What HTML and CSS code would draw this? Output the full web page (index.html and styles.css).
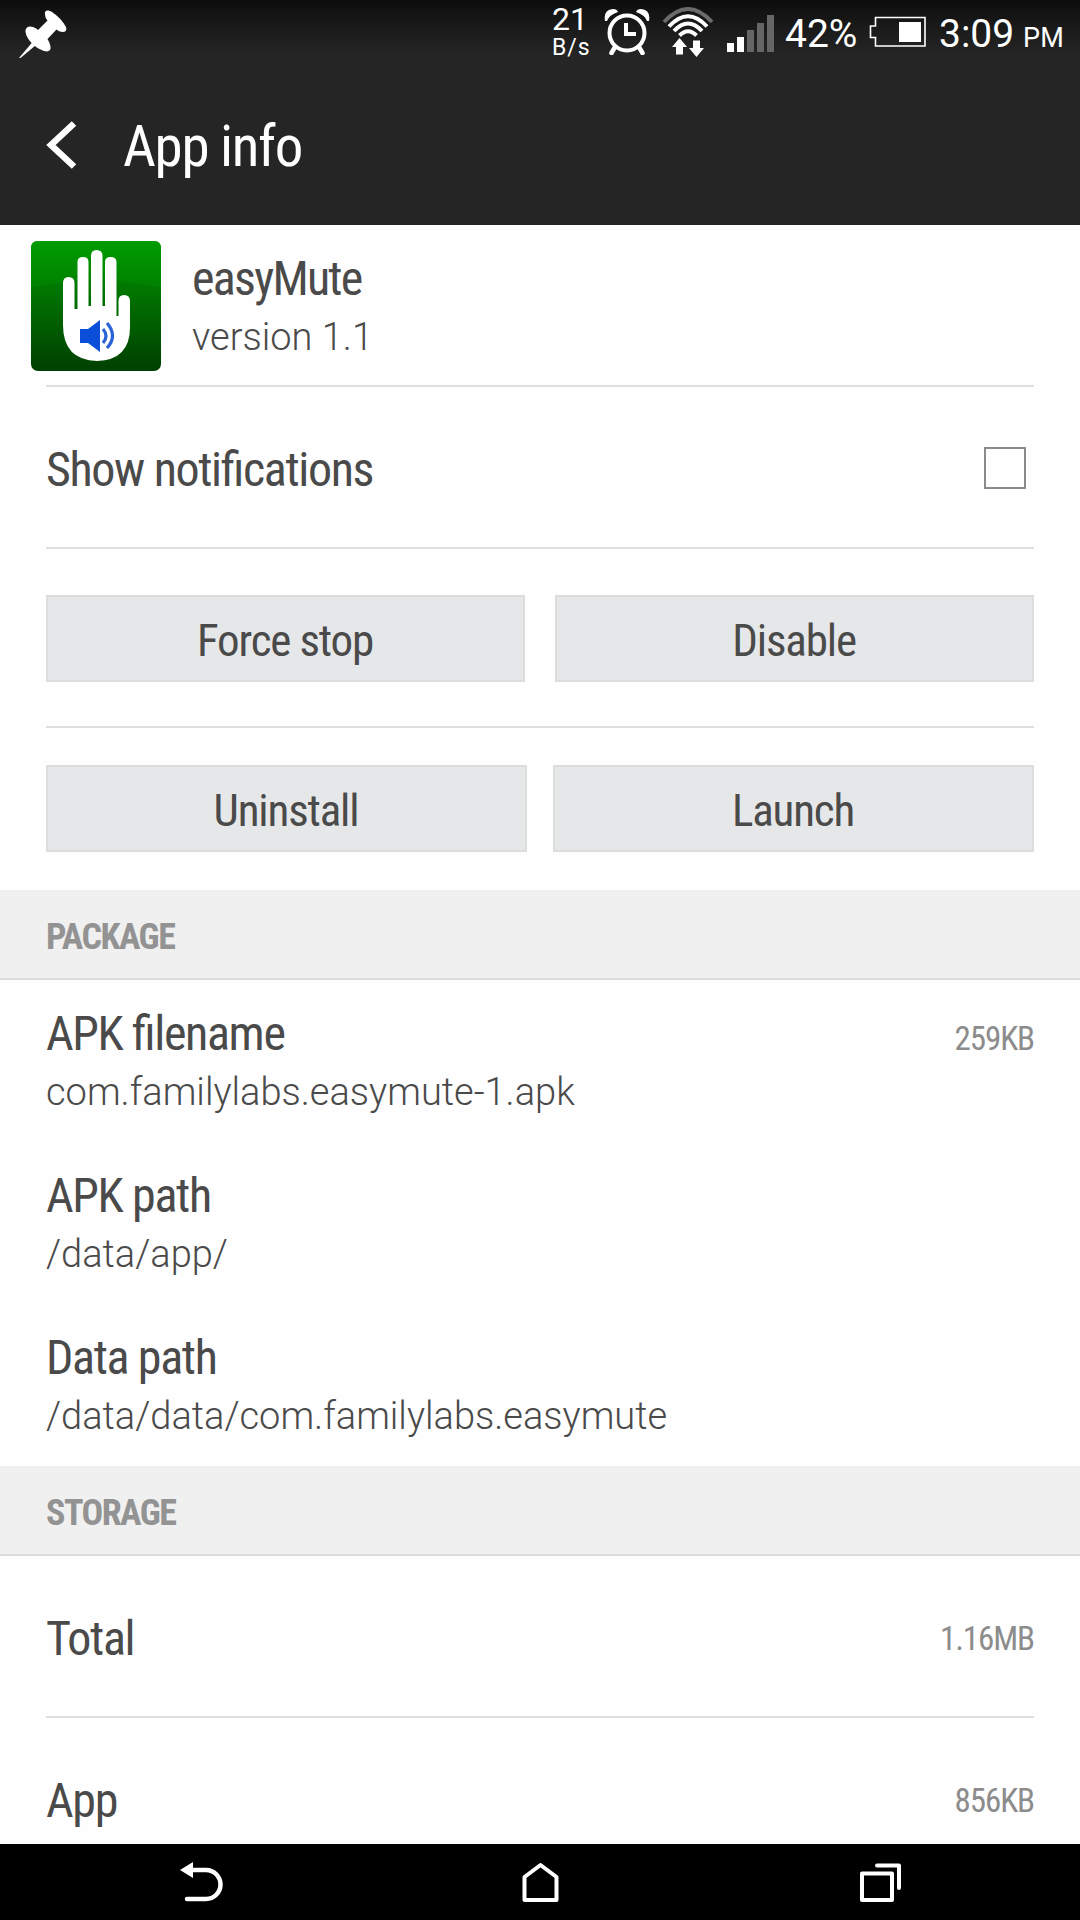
FILE: index.html
```html
<!DOCTYPE html>
<html lang="en">
<head>
<meta charset="utf-8">
<title>App info</title>
<link rel="stylesheet" href="styles.css">
</head>
<body>
<div class="screen">
  <header class="top">
    <div class="status">
      <svg class="pin" width="52" height="60" viewBox="18 0 52 60" fill="#fff"><path d="M19 58L32.500 42L36 45L20.500 58Z"/><path d="M45 14.500C44 10 48 9.500 52 12Q61 18 66 27Q67.500 32 62.500 32Q58.500 31.500 56.500 29.500L47.500 39Q51 45 50.500 49Q49.500 52.500 44 51Q35 48 29 40Q25 34 25.500 30Q27 25 33 27Q36 28 38 30L47.500 20.500Q45 18 45 14.500Z"/></svg>
      <div class="speed"><span class="rate">21</span><span class="unit">B/s</span></div>
      <svg class="alarm" width="46" height="48" viewBox="0 0 46 48" fill="none" stroke="#fff"><circle cx="23" cy="26" r="17.500" stroke-width="4"/><path d="M22 16V27H32" stroke-width="4"/><path d="M11 40L7.500 46M35 40L38.500 46" stroke-width="4.500" stroke-linecap="round"/><path d="M1 14Q-1 3 9 2Q13 2 14 5Q5 8 3 14ZM45 14Q47 3 37 2Q33 2 32 5Q41 8 43 14Z" fill="#fff" stroke="none"/></svg>
      <svg class="wifi" width="52" height="50" viewBox="0 0 52 50" fill="none" stroke="#fff" stroke-width="4"><path d="M2 15Q26 -11 50 15" stroke="#6b6b6b"/><path d="M7 19.500Q26 -1 45 19.500"/><path d="M12 24Q26 9 40 24"/><path d="M17.500 28.500Q26 20 34.500 28.500"/><path d="M17.500 31L25 40H21V47.500H14V40H10ZM34.500 50L27 41H31V33.500H38V41H42Z" fill="#fff" stroke="none"/></svg>
      <svg class="signal" width="48" height="38" viewBox="0 0 48 38"><path d="M0 28h7v9H0zM10 22h7v15h-7z" fill="#fff"/><path d="M20 15h7v22h-7zM30 8h7v29h-7zM40 0h7v37h-7z" fill="#666"/></svg>
      <span class="percent">42%</span>
      <svg class="battery" width="58" height="32" viewBox="0 0 58 32"><path d="M6.500 1.500H56V30H6.500V21.500H1.500V10H6.500Z" fill="none" stroke="#fff" stroke-width="1.600"/><path d="M30 6h22v20H30z" fill="#fff"/></svg>
      <span class="clock">3:09</span><span class="ampm">PM</span>
    </div>
    <div class="titlebar">
      <svg class="back" width="32" height="48" viewBox="0 0 32 48" fill="none" stroke="#fff" stroke-width="6.500"><path d="M28 2.500L5 24L28 45.500"/></svg>
      <h1 class="heading">App info</h1>
    </div>
  </header>

  <main class="content">
    <section class="row app">
      <svg class="appicon" width="130" height="130" viewBox="0 0 130 130">
        <defs>
          <linearGradient id="green" x1="0" y1="0" x2="0" y2="1"><stop offset="0" stop-color="#009000"/><stop offset=".35" stop-color="#007800"/><stop offset="1" stop-color="#003f00"/></linearGradient>
          <linearGradient id="shine" x1="0" y1="0" x2="0" y2="1"><stop offset="0" stop-color="#009c00"/><stop offset="1" stop-color="#008000"/></linearGradient>
        </defs>
        <rect width="130" height="130" rx="7" fill="url(#green)"/>
        <path d="M7 0H123Q130 0 130 7V47Q65 31 0 47V7Q0 0 7 0Z" fill="url(#shine)"/>
        <path d="M32 42Q32 36 37.500 36Q43.500 36 43.500 42V68H46.500V21Q46.500 16 52 16Q57.500 16 57.500 21V65H60V15Q60 9 65.500 9Q71.500 9 71.500 15V65H74V21Q74 16 79.500 16Q85.500 16 85.500 21V75H87.500V60Q87.500 54 93 54Q99 54 99 60V86Q99 119 66 120Q32 119 32 84Z" fill="#fff"/>
        <path d="M49 88H57L69 79V111L57 102H49Z" fill="#0b4fd8"/>
        <path d="M72 88Q78 95 72 102M76 82Q87 95 76 107" fill="none" stroke="#2a62d8" stroke-width="3.200"/>
      </svg>
      <div class="texts"><div class="label name">easyMute</div><div class="sub">version 1.1</div></div>
    </section>
    <section class="row single"><span class="label">Show notifications</span><span class="checkbox"></span></section>
    <section class="actions first"><button class="btn">Force stop</button><button class="btn">Disable</button></section>
    <section class="actions second"><button class="btn">Uninstall</button><button class="btn">Launch</button></section>

    <h2 class="section">PACKAGE</h2>
    <section class="row plain"><div class="texts"><div class="label">APK filename</div><div class="sub">com.familylabs.easymute-1.apk</div></div><span class="value">259KB</span></section>
    <section class="row plain"><div class="texts"><div class="label">APK path</div><div class="sub">/data/app/</div></div></section>
    <section class="row plain"><div class="texts"><div class="label">Data path</div><div class="sub">/data/data/com.familylabs.easymute</div></div></section>

    <h2 class="section">STORAGE</h2>
    <section class="row single"><span class="label">Total</span><span class="value">1.16MB</span></section>
    <section class="row single"><span class="label">App</span><span class="value">856KB</span></section>
  </main>

  <nav class="nav">
    <svg width="44" height="42" viewBox="0 0 44 42" fill="none" stroke="#fff" stroke-width="4.500"><path d="M11 9H26A14.500 14.500 0 0 1 26 38H7" stroke-linecap="round"/><path d="M0 9L13 1V17Z" fill="#fff" stroke="none"/></svg>
    <svg width="40" height="42" viewBox="0 0 40 42" fill="none" stroke="#fff" stroke-width="4" stroke-linejoin="round"><path d="M2.500 16L18.500 4L34.500 16V39H2.500Z"/></svg>
    <svg width="42" height="42" viewBox="0 0 42 42" fill="none" stroke="#fff" stroke-width="4" stroke-linejoin="round"><path d="M2 12.500H32V39H2Z"/><path d="M17 4.500H39V27" stroke-linecap="round"/></svg>
  </nav>
</div>
</body>
</html>
```
FILE: styles.css
```css
* { box-sizing: border-box; }
body { margin: 0; background: #fff; font-family: "Roboto Condensed", Roboto, sans-serif; }
svg { display: block; flex: none; }
.screen { width: 1080px; height: 1920px; display: flex; flex-direction: column; overflow: hidden; background: #fefefe; color: #4a4a4a; font-stretch: 75%; font-feature-settings: "liga" 1; }

.top { height: 225px; flex: none; background: linear-gradient(#0c0c0c, #141414 14px, #252525 54px); color: #fff; }
.status { height: 70px; display: flex; align-items: flex-start; font-family: Roboto, sans-serif; font-stretch: 100%; white-space: nowrap; }
.pin { margin-left: 18px; }
.speed { width: 52px; margin-left: 482px; padding-top: 2px; display: flex; flex-direction: column; font-weight: 400; }
.rate { font-size: 32px; line-height: 35px; }
.unit { font-size: 23px; line-height: 22px; letter-spacing: 1px; }
.alarm { margin-top: 7px; }
.wifi { margin: 7px 0 0 12px; }
.signal { margin: 15px 0 0 13px; }
.percent { width: 84px; margin-left: 10px; font-size: 39px; line-height: 68px; }
.battery { margin-top: 16px; }
.clock { width: 83px; margin-left: 12px; font-size: 39px; line-height: 68px; }
.ampm { margin-left: 1px; font-size: 27px; line-height: 76px; letter-spacing: .3px; }
.titlebar { height: 155px; display: flex; align-items: flex-start; }
.back { margin: 51px 0 0 46px; }
.heading { margin: 43px 0 0 45px; font-size: 57px; line-height: 68px; font-weight: 430; letter-spacing: -1.3px; }

.content { flex: 1; overflow: hidden; }
.row { height: 162px; margin: 0 46px; display: flex; align-items: flex-start; justify-content: space-between; border-bottom: 2px solid #dedede; }
.row.plain { border-bottom: 0; }
.row.single { align-items: center; padding-top: 5px; }
.row.app { justify-content: flex-start; }
.appicon { margin: 16px 31px 0 -15px; }
.texts { padding-top: 26px; white-space: nowrap; }
.label { font-size: 48px; line-height: 56px; font-weight: 430; letter-spacing: -1.35px; }
.name { letter-spacing: -1.75px; }
.sub { margin-top: 7px; font-family: Roboto, sans-serif; font-stretch: 100%; font-weight: 300; font-size: 38px; line-height: 46px; letter-spacing: 0; }
.checkbox { width: 42px; height: 42px; margin: -3px 8px 0 0; border: 2px solid #8a8a8a; }
.value { font-size: 33px; line-height: 40px; letter-spacing: -1.1px; color: #8c8c8c; }
.plain .value { margin-top: 39px; }

.actions { margin: 0 46px; display: grid; grid-template-columns: 1fr 1fr; }
.first { height: 179px; padding-top: 46px; column-gap: 30px; border-bottom: 2px solid #dedede; }
.second { height: 162px; padding-top: 37px; column-gap: 26px; }
.btn { height: 87px; margin: 0; padding: 5px 1px 0 0; border: 2px solid #dcdddd; background: #e6e7e8; color: #4a4a4a; font: inherit; font-size: 45px; line-height: 54px; font-weight: 430; letter-spacing: -1.15px; }

.section { height: 90px; margin: 0; padding: 6px 46px 0; background: #f0f0f0; border-bottom: 2px solid #dcdcdc; color: #939393; font-size: 36px; line-height: 83px; font-weight: 700; letter-spacing: -1.5px; }

.nav { height: 76px; flex: none; background: #000; display: flex; align-items: flex-start; padding: 17px 178px 0 180px; justify-content: space-between; }
```
